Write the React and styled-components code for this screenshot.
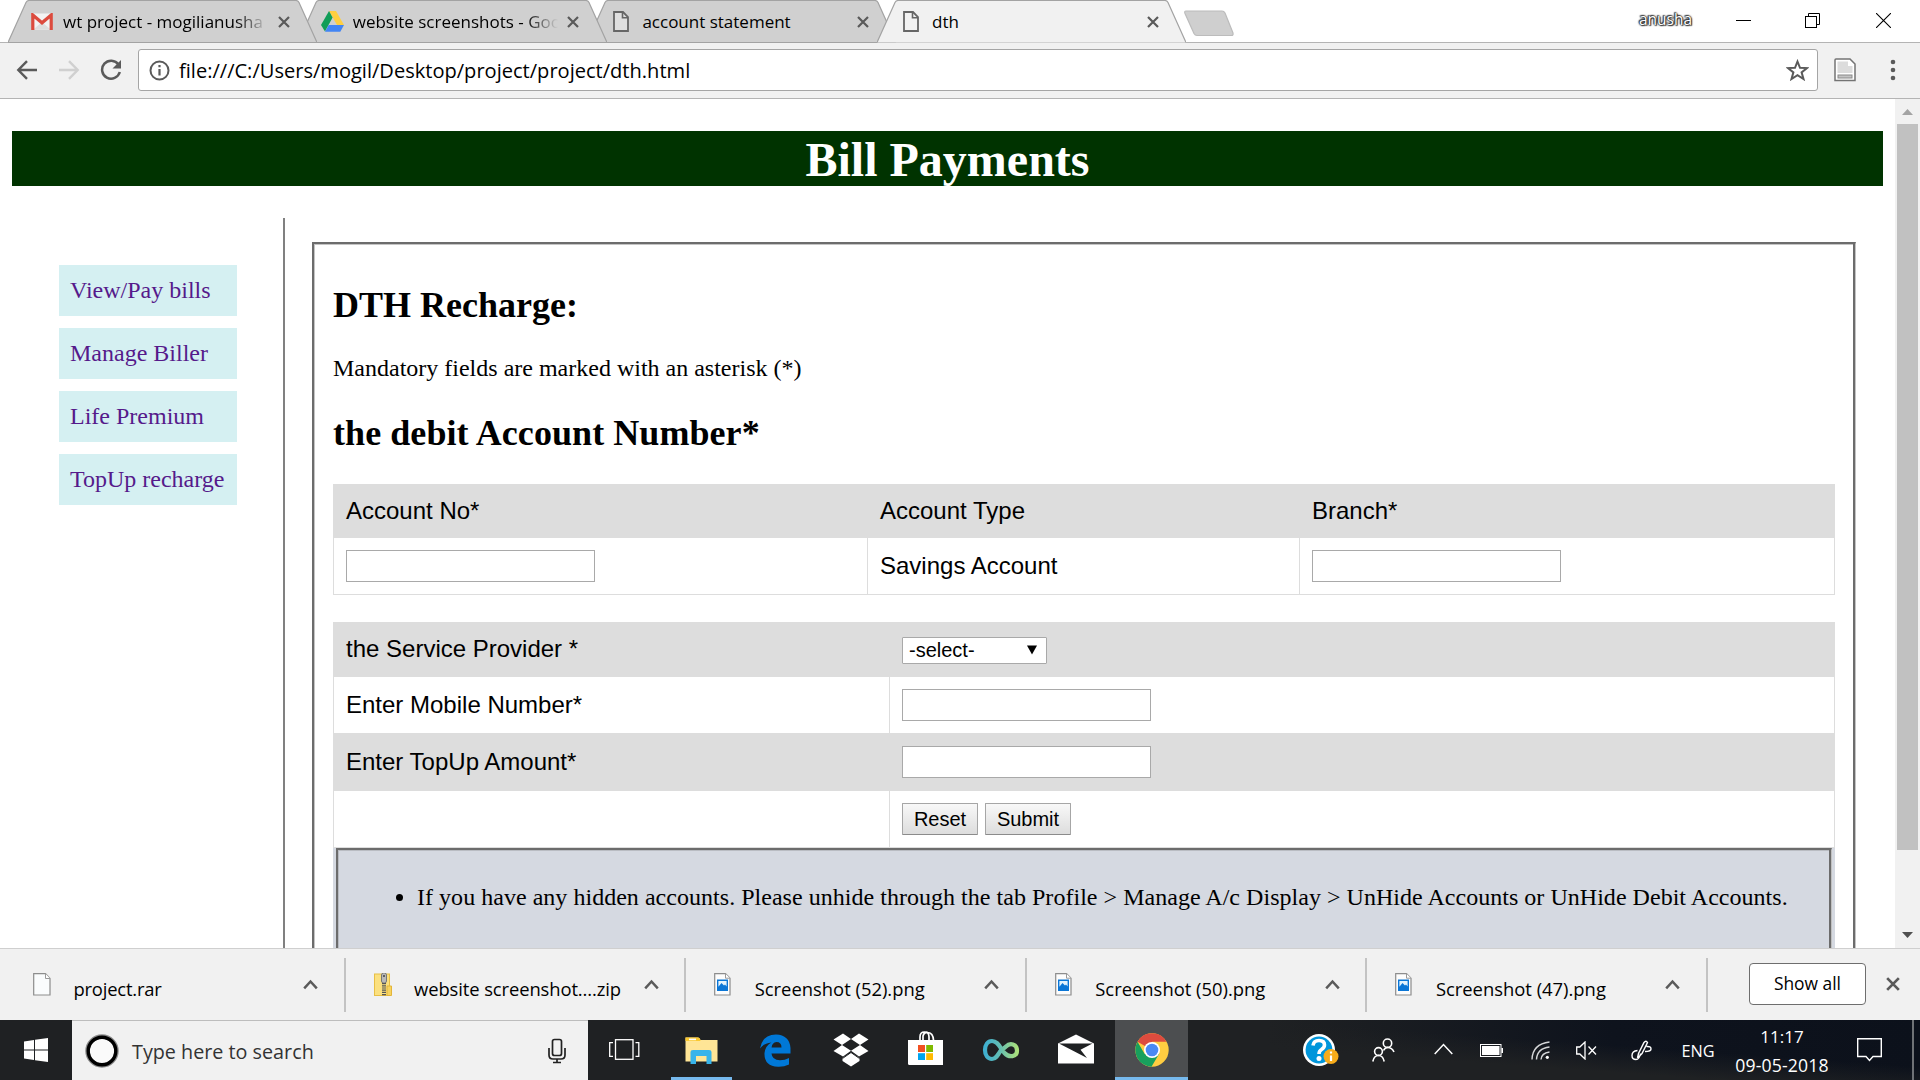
import React from "react";
import styled, { createGlobalStyle, css } from "styled-components";

const GlobalStyle = createGlobalStyle`
  *, *::before, *::after { box-sizing: border-box; }
  body { margin: 0; background: #fff; overflow: hidden; }
  svg { display: block; flex: none; }
`;

const uiFont = `"Open Sans", "Noto Sans", sans-serif`;
const serif = `"Liberation Serif", "Times New Roman", serif`;
const sans = `"Liberation Sans", Arial, sans-serif`;

const Screen = styled.div`
  width: 1920px;
  height: 1080px;
  display: flex;
  flex-direction: column;
  overflow: hidden;
  background: #fff;
  font-family: ${uiFont};
  color: #000;
`;

/* ---------- tab strip ---------- */
const TabStrip = styled.div`
  height: 43px;
  flex: none;
  display: flex;
  padding-left: 8px;
  background: linear-gradient(#b4b4b4, #b4b4b4) 0 42px / 100% 1px no-repeat;
`;

const Tab = styled.div`
  position: relative;
  isolation: isolate;
  width: 309px;
  height: 43px;
  margin-right: -19.3px;
  display: flex;
  align-items: center;
  padding-left: 23px;
  z-index: ${(p) => p.$layer};
`;

const TabShape = styled.svg`
  position: absolute;
  inset: 0;
  z-index: -1;
`;

const TabIcon = styled.div`
  width: 32px;
  display: flex;
  padding: 0 0 0 ${(p) => p.$indent || 0}px;
`;

const TabTitle = styled.div`
  width: 205px;
  white-space: nowrap;
  font-size: 17px;
  line-height: 24px;
  ${(p) =>
    p.$fade &&
    css`
      mask-image: linear-gradient(to right, #000 172px, transparent 205px);
    `}
`;

const TabClose = styled.div`
  margin-left: 9.5px;
  padding-top: 1px;
`;

const NewTab = styled.svg`
  margin: 8px 0 0 15px;
`;

const WindowControls = styled.div`
  margin-left: auto;
  display: flex;
  align-items: flex-start;
`;

const Profile = styled.div`
  width: 54px;
  margin: 8px 43px 0 0;
  font-size: 15.5px;
  line-height: 22px;
  color: #fff;
  text-shadow: 0 0 1px #222, 0 0 2px #222, 0 0 2px #333, 1px 1px 1px #444, -1px -1px 1px #444;
`;

const ControlIcon = styled.div`
  width: 15px;
  margin: 13px ${(p) => p.$gap}px 0 0;
`;

/* ---------- toolbar ---------- */
const Toolbar = styled.div`
  height: 56px;
  flex: none;
  display: flex;
  align-items: center;
  padding: 0 0 1px 16px;
  background: #f1f1f1;
  border-bottom: 1px solid #b4b4b4;
`;

const NavIcons = styled.div`
  width: 122px;
  display: flex;
  gap: 20px;
  align-items: center;
`;

const AddressBar = styled.div`
  width: 1680px;
  height: 42px;
  display: flex;
  align-items: center;
  padding: 0 8px 0 10px;
  border: 1px solid #a5a5a5;
  border-radius: 3px;
  background: #fff;
`;

const Url = styled.div`
  flex: 1;
  margin-left: 9px;
  padding-top: 1px;
  font-size: 20.07px;
  line-height: 28px;
`;

const ToolbarEnd = styled.div`
  display: flex;
  align-items: center;
  gap: 33px;
  margin-left: 15px;
`;

/* ---------- viewport ---------- */
const Viewport = styled.div`
  height: 849px;
  flex: none;
  display: flex;
  overflow: hidden;
`;

const Page = styled.div`
  width: 1895px;
  padding: 32px 12px 0;
  font-family: ${serif};
  font-size: 24px;
  line-height: 27px;
`;

const Banner = styled.h1`
  margin: 0 0 32px;
  height: 55px;
  line-height: 57px;
  font-size: 48px;
  text-align: center;
  color: #fff;
  background: #003300;
`;

const Columns = styled.div`
  display: flex;
  height: 730px;
`;

const Sidebar = styled.nav`
  width: 273px;
  padding: 47px 46px 0 47px;
  border-right: 2px solid #808080;
  display: flex;
  flex-direction: column;
  gap: 12px;
`;

const SideLink = styled.a`
  display: block;
  height: 51px;
  padding: 12px 11px;
  white-space: nowrap;
  color: #551a8b;
  background: #d5f0f2;
`;

const Panel = styled.main`
  width: 1544px;
  height: 800px;
  margin: 24px 0 0 27px;
  padding: 41px 20px 0 19px;
  border-style: solid;
  border-width: 2px 1px 0 2px;
  border-color: #6c6c6c #c4c4c4 #6c6c6c #6c6c6c;
  box-shadow: inset -2px 0 0 #6c6c6c, inset 1px 1px 0 #c4c4c4;
`;

const Heading = styled.h2`
  margin: 0;
  font-size: 36px;
  line-height: 41px;
  letter-spacing: ${(p) => p.$ls || 0}px;
`;

const Hint = styled.p`
  margin: 29px 0 31px;
`;

const Table = styled.div`
  width: 1502px;
  margin-top: ${(p) => p.$top}px;
  font-family: ${sans};
`;

const Row = styled.div`
  display: grid;
  grid-template-columns: ${(p) => p.$cols};
  height: ${(p) => p.$h}px;
  background: ${(p) => (p.$shaded ? "#dddddd" : "#fff")};
  border-right: 1px solid #ddd;
  border-bottom: ${(p) => (p.$last ? "1px solid #ddd" : "0")};
`;

const Cell = styled.div`
  display: flex;
  align-items: center;
  gap: 7px;
  padding-left: 12px;
  border-left: 1px solid #ddd;
`;

const Label = styled.span`
  padding-bottom: 2px;
`;

const TextInput = styled.input`
  width: 249px;
  height: 32px;
  padding: 0 4px;
  border: 1px solid #a9a9a9;
  border-radius: 0;
  background: #fff;
  outline: none;
`;

const SelectBox = styled.div`
  width: 145px;
  height: 27px;
  margin-top: 2px;
  padding: 0 9px 1px 6px;
  display: flex;
  align-items: center;
  justify-content: space-between;
  border: 1px solid #a9a9a9;
  border-radius: 1px;
  background: #fff;
  font-size: 20px;
  line-height: 23px;
`;

const Button = styled.button`
  width: ${(p) => p.$w}px;
  height: 32px;
  padding: 0;
  border: 1px solid #a6a6a6;
  border-bottom-color: #8b8b8b;
  border-radius: 1px;
  background: linear-gradient(#f8f8f8, #dddddd);
  font: 20px ${sans};
  color: #000;
`;

const NoteCell = styled.div`
  height: 200px;
  padding: 0 3px 0 3px;
  background: #d5d9e1;
  border-top: 1px solid #ddd;
`;

const Note = styled.div`
  height: 190px;
  border-style: solid;
  border-width: 2px 1px 0 2px;
  border-color: #6c6c6c #c0c0c0 #6c6c6c #6c6c6c;
  box-shadow: inset -2px 0 0 #6c6c6c, inset 1px 1px 0 #b9bcc2;
  font-family: ${serif};
`;

const NoteList = styled.ul`
  margin: 0;
  padding: 34px 0 0 79px;
  white-space: nowrap;
  letter-spacing: 0.029px;
`;

const Scrollbar = styled.div`
  width: 25px;
  display: flex;
  flex-direction: column;
  align-items: center;
  background: #f1f1f1;
`;

const ScrollArrow = styled.svg`
  margin: ${(p) => p.$m};
`;

const Thumb = styled.div`
  width: 21px;
  height: 726px;
  background: #c1c1c1;
`;

/* ---------- download shelf ---------- */
const Shelf = styled.div`
  height: 72px;
  flex: none;
  display: flex;
  align-items: flex-start;
  padding-left: 5px;
  background: #f1f1f1;
  border-top: 1px solid #cfcfcf;
`;

const Download = styled.div`
  width: 340.6px;
  height: 54px;
  margin-top: 9px;
  padding-left: 28px;
  display: flex;
  align-items: flex-start;
  border-right: 2px solid #c3c3c3;
`;

const FileSlot = styled.div`
  width: 40.5px;
  padding-top: 15px;
`;

const FileName = styled.div`
  width: 229.5px;
  padding-top: 17px;
  font-size: 18.4px;
  line-height: 28px;
  letter-spacing: ${(p) => p.$ls || 0}px;
  white-space: nowrap;
`;

const ShelfChevron = styled.svg`
  margin-top: 21px;
`;

const ShowAll = styled.div`
  width: 117px;
  height: 42px;
  margin: 14px 20px 0 41px;
  border: 1px solid #6e6e6e;
  border-radius: 4px;
  background: #fff;
  text-align: center;
  font-size: 17.4px;
  line-height: 39px;
`;

const ShelfClose = styled.div`
  margin-top: 28px;
`;

/* ---------- taskbar ---------- */
const Taskbar = styled.div`
  height: 60px;
  flex: none;
  display: flex;
  color: #fff;
  background: linear-gradient(4deg, #1f2123 0%, #1f2123 62%, transparent 76%),
    linear-gradient(to right, #1f2123 0%, #1f2123 66%, #0e131d 84%, #0c111b 100%);
`;

const Slot = styled.div`
  width: ${(p) => p.$w}px;
  height: 60px;
  display: flex;
  align-items: center;
  justify-content: center;
  padding-bottom: ${(p) => p.$lift || 0}px;
  background: ${(p) => (p.$active ? "#4c4e50" : "transparent")};
`;

const RunningSlot = styled(Slot)`
  border-bottom: 3px solid #76b9ed;
  padding-top: 3px;
`;

const SearchBox = styled.div`
  width: 516px;
  height: 60px;
  display: flex;
  align-items: center;
  padding: 0 19px 0 13px;
  background: #f1f1f1;
  border-top: 1px solid #bdbdbd;
`;

const SearchText = styled.div`
  flex: 1;
  margin-left: 13px;
  padding-top: 2px;
  font-size: 19.75px;
  line-height: 28px;
  color: #333;
`;

const Language = styled.div`
  font-size: 16.3px;
  line-height: 24px;
  padding-top: 2px;
`;

const Clock = styled.div`
  text-align: center;
  font-size: 17px;
  line-height: 28px;
  padding-top: 1px;
`;

const DateText = styled.div`
  font-size: 17.6px;
  letter-spacing: 0.15px;
`;

const DesktopEdge = styled.div`
  width: 2px;
  height: 60px;
  margin-left: 21px;
  background: #6f7276;
`;

const Cross = ({ size = 12, color = "#5a5a5a", width = 2.2 }) => (
  <svg width={size} height={size} viewBox="0 0 12 12">
    <path d="M1 1L11 11M11 1L1 11" stroke={color} strokeWidth={width} fill="none" />
  </svg>
);

const PageIcon = () => (
  <svg width="16" height="21" viewBox="0 0 16 21">
    <path d="M1 1H10L15 6V20H1Z" fill="#f6f6f6" fillOpacity="0.4" stroke="#666" strokeWidth="1.8" />
    <path d="M9.5 1V6.7H15" fill="none" stroke="#666" strokeWidth="1.6" />
  </svg>
);

const GmailIcon = () => (
  <svg width="22" height="17" viewBox="0 0 22 17">
    <rect x="1" y="0.5" width="20" height="16" rx="1" fill="#f3f3f3" />
    <path d="M3 16L11 9L19 16Z" fill="#dedede" />
    <path d="M1.8 17V2L11 9.8L20.2 2V17" fill="none" stroke="#dc4b3e" strokeWidth="3.2" />
  </svg>
);

const DriveIcon = () => (
  <svg width="23" height="21" viewBox="0 0 23 21">
    <path d="M8 0H15L23 14H16Z" fill="#ffcf40" />
    <path d="M8 0L11.6 6.6L4 20.5L0 14Z" fill="#109d58" />
    <path d="M7.7 14H23L19.3 20.8H4Z" fill="#4285f4" />
  </svg>
);

const tabs = [
  { title: "wt project - mogilianusha", icon: <GmailIcon />, fade: true, layer: 4 },
  { title: "website screenshots - Goo", icon: <DriveIcon />, fade: true, layer: 3 },
  { title: "account statement", icon: <PageIcon />, indent: 2.5, layer: 2 },
  { title: "dth", icon: <PageIcon />, indent: 2.5, active: true, layer: 5 },
];

const BrowserTab = ({ title, icon, fade, indent, active, layer }) => (
  <Tab $layer={layer}>
    <TabShape width="309" height="43" viewBox="0 0 309 43">
      <path
        d="M0 42.5L18 2.5Q19 0.5 21 0.5H288Q290 0.5 291 2.5L309 42.5Z"
        fill={active ? "#f1f1f1" : "#d0d0d0"}
      />
      <path
        d={`M0 42.5L18 2.5Q19 0.5 21 0.5H288Q290 0.5 291 2.5L309 42.5${active ? "" : "Z"}`}
        fill="none"
        stroke="#a3a3a3"
        strokeWidth="1.2"
      />
    </TabShape>
    <TabIcon $indent={indent}>{icon}</TabIcon>
    <TabTitle $fade={fade}>{title}</TabTitle>
    <TabClose>
      <Cross size={12} />
    </TabClose>
  </Tab>
);

const BlankFile = () => (
  <svg width="18" height="23" viewBox="0 0 18 23">
    <path d="M0.7 0.7H12.5L17 5.5V22H0.7Z" fill="#fafcfd" stroke="#8d8d8d" strokeWidth="1.2" />
    <path d="M12.5 0.7V5.5H17" fill="#fff" stroke="#9a9a9a" />
  </svg>
);

const ZipFile = () => (
  <svg width="18" height="23" viewBox="0 0 18 23">
    <rect x="0.5" y="1" width="15" height="21.5" fill="#fbe07f" stroke="#e8bf45" />
    <path d="M13 13H17.5V22.5H13Z" fill="#f7d35e" stroke="#e3b53a" />
    <rect x="7.5" y="0" width="5" height="10" rx="2" fill="#b9b9b9" stroke="#777" />
    <path d="M10 10V23" stroke="#555" strokeWidth="4" strokeDasharray="1.2 1" />
    <circle cx="10" cy="3" r="1" fill="#444" />
  </svg>
);

const ImageFile = () => (
  <svg width="17" height="23" viewBox="0 0 17 23">
    <path d="M0.7 0.7H11.5L16 5.2V22H0.7Z" fill="#fdfdfd" stroke="#8d8d8d" strokeWidth="1.2" />
    <path d="M11.5 0.7V5.2H16" fill="#fff" stroke="#9a9a9a" />
    <rect x="3" y="6.5" width="11" height="11.5" fill="#0b76d6" />
    <path d="M4.4 8H12.600V13.500L11 11.500L10 12.500L7.500 10L4.400 13.800Z" fill="#e4f3fd" />
  </svg>
);

const downloads = [
  { name: "project.rar", icon: <BlankFile />, ls: -0.2 },
  { name: "website screenshot....zip", icon: <ZipFile />, ls: -0.1 },
  { name: "Screenshot (52).png", icon: <ImageFile /> },
  { name: "Screenshot (50).png", icon: <ImageFile /> },
  { name: "Screenshot (47).png", icon: <ImageFile /> },
];

const accountCols = "534px 432px 1fr";
const formCols = "556px 1fr";

export default function App() {
  return (
    <Screen>
      <GlobalStyle />
      <TabStrip>
        {tabs.map((t) => (
          <BrowserTab key={t.title} {...t} />
        ))}
        <NewTab width="54" height="30" viewBox="0 0 54 30">
          <path d="M4 3H40Q42 3 43 5L51 25Q51.500 27.500 49.500 27.500H15Q13 27.500 12 25.500L3 5.500Q2 3 4 3Z" fill="#cfcfcf" stroke="#bcbcbc" strokeWidth="1.2" />
        </NewTab>
        <WindowControls>
          <Profile>anusha</Profile>
          <ControlIcon $gap={54}>
            <svg width="15" height="15" viewBox="0 0 15 15"><path d="M0 7.500H15" stroke="#000" /></svg>
          </ControlIcon>
          <ControlIcon $gap={56}>
            <svg width="15" height="15" viewBox="0 0 15 15" fill="none" stroke="#000">
              <rect x="0.500" y="3.500" width="11" height="11" />
              <path d="M3.500 3.500V0.500H14.500V11.500H11.500" />
            </svg>
          </ControlIcon>
          <ControlIcon $gap={29}>
            <svg width="15" height="15" viewBox="0 0 15 15"><path d="M0 0L15 15M15 0L0 15" stroke="#000" strokeWidth="1.1" /></svg>
          </ControlIcon>
        </WindowControls>
      </TabStrip>

      <Toolbar>
        <NavIcons>
          <svg width="22" height="20" viewBox="0 0 22 20" fill="none" stroke="#5a5a5a" strokeWidth="2.400"><path d="M21 10H2.500M11 1.200L2.300 10L11 18.800" /></svg>
          <svg width="22" height="20" viewBox="0 0 22 20" fill="none" stroke="#d0d0d0" strokeWidth="2.400"><path d="M1 10H19.500M11 1.200L19.700 10L11 18.800" /></svg>
          <svg width="22" height="22" viewBox="0 0 22 22"><path d="M18.500 5.500A9 9 0 1 0 19.800 13" fill="none" stroke="#5a5a5a" strokeWidth="2.500" /><path d="M21 1V9.500H12.500Z" fill="#5a5a5a" /></svg>
        </NavIcons>
        <AddressBar>
          <svg width="21" height="21" viewBox="0 0 21 21">
            <circle cx="10.500" cy="10.500" r="9" fill="none" stroke="#5a5a5a" strokeWidth="2" />
            <path d="M10.500 9V15.500M10.500 5V7.200" stroke="#5a5a5a" strokeWidth="2.200" />
          </svg>
          <Url>file:///C:/Users/mogil/Desktop/project/project/dth.html</Url>
          <svg width="23" height="22" viewBox="0 0 23 22"><path d="M11.500 2.500L14 8.800L21 9.100L15.600 13.400L17.500 20L11.500 16.200L5.500 20L7.400 13.400L2 9.100L9 8.800Z" fill="none" stroke="#5a5a5a" strokeWidth="2" /></svg>
        </AddressBar>
        <ToolbarEnd>
          <svg width="24" height="24" viewBox="0 0 24 24">
            <path d="M3 1H17L22 6V22.500H2V2Q2 1 3 1Z" fill="#fff" stroke="#747474" strokeWidth="1.500" />
            <path d="M4.500 3.500H15V8H19.500V15H4.500Z" fill="#dcdcdc" />
            <rect x="5" y="17" width="14" height="3" fill="#c3c3c3" stroke="#8a8a8a" />
          </svg>
          <svg width="6" height="22" viewBox="0 0 6 22" fill="#5a5a5a"><circle cx="3" cy="3" r="2.300" /><circle cx="3" cy="11" r="2.300" /><circle cx="3" cy="19" r="2.300" /></svg>
        </ToolbarEnd>
      </Toolbar>

      <Viewport>
        <Page>
          <Banner>Bill Payments</Banner>
          <Columns>
            <Sidebar>
              {["View/Pay bills", "Manage Biller", "Life Premium", "TopUp recharge"].map((l) => (
                <SideLink key={l}>{l}</SideLink>
              ))}
            </Sidebar>
            <Panel>
              <Heading>DTH Recharge:</Heading>
              <Hint>Mandatory fields are marked with an asterisk (*)</Hint>
              <Heading $ls={0.07}>the debit Account Number*</Heading>
              <Table $top={30}>
                <Row $cols={accountCols} $h={54} $shaded>
                  <Cell><Label>Account No*</Label></Cell>
                  <Cell><Label>Account Type</Label></Cell>
                  <Cell><Label>Branch*</Label></Cell>
                </Row>
                <Row $cols={accountCols} $h={57} $last>
                  <Cell><TextInput /></Cell>
                  <Cell><Label>Savings Account</Label></Cell>
                  <Cell><TextInput /></Cell>
                </Row>
              </Table>
              <Table $top={27}>
                <Row $cols={formCols} $h={55} $shaded>
                  <Cell><Label>the Service Provider *</Label></Cell>
                  <Cell>
                    <SelectBox>
                      -select-
                      <svg width="10" height="10" viewBox="0 0 10 10"><path d="M0 0.500H10L5 9.500Z" fill="#000" /></svg>
                    </SelectBox>
                  </Cell>
                </Row>
                <Row $cols={formCols} $h={56}>
                  <Cell><Label>Enter Mobile Number*</Label></Cell>
                  <Cell><TextInput /></Cell>
                </Row>
                <Row $cols={formCols} $h={58} $shaded>
                  <Cell><Label>Enter TopUp Amount*</Label></Cell>
                  <Cell><TextInput /></Cell>
                </Row>
                <Row $cols={formCols} $h={56}>
                  <Cell />
                  <Cell>
                    <Button $w={76}>Reset</Button>
                    <Button $w={86}>Submit</Button>
                  </Cell>
                </Row>
                <NoteCell>
                  <Note>
                    <NoteList>
                      <li>If you have any hidden accounts. Please unhide through the tab Profile &gt; Manage A/c Display &gt; UnHide Accounts or UnHide Debit Accounts.</li>
                    </NoteList>
                  </Note>
                </NoteCell>
              </Table>
            </Panel>
          </Columns>
        </Page>
        <Scrollbar>
          <ScrollArrow $m="10px 0 9px" width="11" height="6" viewBox="0 0 11 6"><path d="M0 6L5.500 0L11 6Z" fill="#a3a3a3" /></ScrollArrow>
          <Thumb />
          <ScrollArrow $m="82px 0 0" width="11" height="6" viewBox="0 0 11 6"><path d="M0 0L5.500 6L11 0Z" fill="#505050" /></ScrollArrow>
        </Scrollbar>
      </Viewport>

      <Shelf>
        {downloads.map((d) => (
          <Download key={d.name}>
            <FileSlot>{d.icon}</FileSlot>
            <FileName $ls={d.ls}>{d.name}</FileName>
            <ShelfChevron width="15" height="11" viewBox="0 0 15 11"><path d="M1.200 9.300L7.500 2.500L13.800 9.300" fill="none" stroke="#5a5a5a" strokeWidth="2.500" /></ShelfChevron>
          </Download>
        ))}
        <ShowAll>Show all</ShowAll>
        <ShelfClose><Cross size={14} width={2.3} /></ShelfClose>
      </Shelf>

      <Taskbar>
        <Slot $w={72}>
          <svg width="24" height="24" viewBox="0 0 24 24" fill="#fff"><path d="M0 3.400L10 2V11.500H0ZM11 1.800L24 0V11.500H11ZM0 12.500H10V22L0 20.600ZM11 12.500H24V24L11 22.200Z" /></svg>
        </Slot>
        <SearchBox>
          <svg width="34" height="34" viewBox="0 0 34 34"><circle cx="17" cy="17" r="14.500" fill="#fafafa" stroke="#8a8a8a" strokeWidth="4.500" /><circle cx="17" cy="17" r="13.800" fill="none" stroke="#000" strokeWidth="3.400" /></svg>
          <SearchText>Type here to search</SearchText>
          <svg width="24" height="26" viewBox="0 0 24 26" fill="none" stroke="#222" strokeWidth="1.700"><rect x="7.500" y="1.500" width="9" height="16" rx="2" /><path d="M4 10V17Q4 21 8 21H16Q20 21 20 17V10M12 21V24.500M8 24.500H16" /></svg>
        </SearchBox>

        <Slot $w={73} $lift={1}>
          <svg width="31" height="21" viewBox="0 0 31 21" fill="none" stroke="#fff" strokeWidth="1.300"><rect x="6.500" y="0.700" width="17.500" height="19.600" /><path d="M4 3.600H0.700V17.400H4M26.500 3.600H29.800V17.400H26.500" /></svg>
        </Slot>
        <Slot $w={10} />
        <RunningSlot $w={61}>
          <svg width="33" height="27" viewBox="0 0 33 27">
            <path d="M0.500 0.500H13Q15 0.500 15.500 3H32.500V24.500H0.500Z" fill="#ffe596" />
            <path d="M0.500 0.500H13Q15 0.500 15.500 4H0.500Z" fill="#fbc92f" />
            <rect x="4" y="1.600" width="7" height="1.600" fill="#fff" />
            <path d="M5.500 27V15Q5.500 13 8 13H24Q26.500 13 26.500 15V27H21.500V19H11V27Z" fill="#38b4ea" />
          </svg>
        </RunningSlot>
        <Slot $w={6} />
        <Slot $w={75}>
          <svg width="31" height="33" viewBox="0 0 31 33"><path d="M0 14.500Q2.500 0.500 16 0.500Q29.500 1 30.500 14V19.500H11.500Q12 26 20 26.300Q25 26.300 29 24V30.500Q24 33 18 32.800Q4 32 4.500 19Q5.500 11.500 11.500 8.500Q4 9 0 14.500ZM11.600 13.500H21.500Q21.500 8 16.500 8Q12 8.500 11.600 13.500Z" fill="#0078d7" /></svg>
        </Slot>
        <Slot $w={75}>
          <svg width="36" height="34" viewBox="0 0 36 34" fill="#fff"><path d="M10 0.500L18 6L9 12L0.500 6.500ZM26 0.500L35.500 6.500L27 12L18 6ZM0.500 18L9 12L18 17.800L10 23.500ZM27 12L35.500 18L26 23.500L18 17.800ZM18 19.500L26.500 25V28L18 33.500L9.500 28V25Z" /><path d="M9.500 25.500L18 19.500L26.500 25.500" fill="none" stroke="#1f2123" strokeWidth="1" /></svg>
        </Slot>
        <Slot $w={75} $lift={3}>
          <svg width="35" height="35" viewBox="0 0 35 35"><path d="M12 9V6Q12 1 16.500 1Q21 1 21 6V9M15 9V5Q16 1 20 1.500Q25 2 25.500 9" fill="none" stroke="#fff" strokeWidth="1.700" /><path d="M0 9H35V34H1.500Q0 34 0 32.500Z" fill="#fff" /><path d="M10 14H17V21H10Z" fill="#f25022" /><path d="M18.200 14H25V21H18.200Z" fill="#7fba00" /><path d="M10 22.200H17V29H10Z" fill="#00a4ef" /><path d="M18.200 22.200H25V29H18.200Z" fill="#ffb900" /></svg>
        </Slot>
        <Slot $w={75}>
          <svg width="38" height="24" viewBox="0 0 38 24">
            <defs><linearGradient id="loop" x1="0" x2="1"><stop offset="0" stopColor="#3fb0d0" /><stop offset="0.450" stopColor="#62bdb4" /><stop offset="1" stopColor="#a9e07c" /></linearGradient></defs>
            <path d="M19 12C15.500 18 13.500 21 10 21C5.500 21 3 17 3 12C3 7 5.500 3 10 3C16 3 18 10 22.500 15C27 20 35 19 35 12.500C35 6 28 4.500 24 8.500Q21.500 11 19 12" fill="none" stroke="url(#loop)" strokeWidth="4.200" />
          </svg>
        </Slot>
        <Slot $w={75} $lift={3}>
          <svg width="36" height="30" viewBox="0 0 36 30"><path d="M0 9.500L18 0.500L36 9.500V29.500H0Z" fill="#fff" /><path d="M1 9.500H34.500L22.500 15.800L29 24L16 17.200Z" fill="#1f2123" /></svg>
        </Slot>
        <Slot $w={2} />
        <RunningSlot $w={73} $active>
          <svg width="34" height="34" viewBox="0 0 34 34">
            <circle cx="17" cy="17" r="16.700" fill="#ffcd41" />
            <path d="M17 17L2.500 8.700A16.700 16.700 0 0 1 31.500 8.700H17Z" fill="#dd4b3e" />
            <path d="M2.500 8.700A16.700 16.700 0 0 0 16.500 33.700L24.300 20.500L17 17L9.700 21Z" fill="#18a05d" />
            <circle cx="17" cy="17" r="8" fill="#fff" />
            <circle cx="17" cy="17" r="6.300" fill="#4a89f3" />
          </svg>
        </RunningSlot>
        <Slot $w={101} />

        <Slot $w={63}>
          <svg width="36" height="34" viewBox="0 0 36 34">
            <circle cx="16" cy="17" r="16" fill="#fff" />
            <circle cx="16" cy="17" r="13.400" fill="#0096db" />
            <path d="M10 12.500Q10.500 7.500 16 7.500Q21.500 7.500 21.500 12Q21.500 14.500 18.500 16.500Q16 18 16 21" fill="none" stroke="#fff" strokeWidth="3.600" />
            <circle cx="16" cy="25.500" r="2.500" fill="#fff" />
            <circle cx="28" cy="23.500" r="7.500" fill="#f7ac1b" />
            <path d="M28 22.500V28M28 18.500V20.500" stroke="#fff" strokeWidth="2.200" />
          </svg>
        </Slot>
        <Slot $w={62}>
          <svg width="23" height="24" viewBox="0 0 23 24" fill="none" stroke="#fff" strokeWidth="1.600"><circle cx="15.500" cy="5.200" r="4.200" /><circle cx="6.500" cy="13.500" r="3.900" /><path d="M11.500 12.500Q13 9.500 15.500 9.500Q20 9.500 22 14M0.800 23.500Q2 17.500 6.500 17.500Q11 17.500 12.200 23.500" /></svg>
        </Slot>
        <Slot $w={58} $lift={2}>
          <svg width="19" height="12" viewBox="0 0 19 12" fill="none" stroke="#fff" strokeWidth="1.500"><path d="M0.700 11L9.500 1.500L18.300 11" /></svg>
        </Slot>
        <Slot $w={39}>
          <svg width="23" height="13" viewBox="0 0 23 13"><rect x="0.500" y="0.500" width="20.500" height="12" fill="none" stroke="#fff" /><rect x="2" y="2" width="17.500" height="9" fill="#fff" /><rect x="21.500" y="4" width="1.500" height="5" fill="#fff" /></svg>
        </Slot>
        <Slot $w={58}>
          <svg width="19" height="19" viewBox="0 0 19 19" fill="none" stroke="#d5d7d9" strokeWidth="1.400"><path d="M1 18.500Q1.500 3 18.500 1" /><path d="M5.500 18.500Q6 7.500 18.500 6" /><path d="M10 18.500Q10.500 12 18.500 11" /><circle cx="16.300" cy="16.300" r="1.600" fill="#fff" stroke="none" /></svg>
        </Slot>
        <Slot $w={34}>
          <svg width="21" height="19" viewBox="0 0 21 19" fill="none" stroke="#fff" strokeWidth="1.300"><path d="M0.700 6H3.800L9 1V18L3.800 13H0.700ZM12.500 5.500L20 13.500M20 5.500L12.500 13.500" /></svg>
        </Slot>
        <Slot $w={76}>
          <svg width="21" height="21" viewBox="0 0 21 21" fill="none" stroke="#fff" strokeWidth="1.400"><path d="M6.500 18L7.500 13.500L13 2.500Q15 0 16.500 2.500L11 13.500L6.500 18M6.500 10.500Q1 11 1 15.500Q1 19.500 5 19.500M9.500 13.500Q8.500 19.500 5 19.500M15.500 6.500Q20 6 20 9Q20 11.500 14 11.500" /></svg>
        </Slot>
        <Slot $w={38}><Language>ENG</Language></Slot>
        <Slot $w={130}>
          <Clock>
            11:17
            <DateText>09-05-2018</DateText>
          </Clock>
        </Slot>
        <Slot $w={44}>
          <svg width="25" height="24" viewBox="0 0 25 24" fill="none" stroke="#fff" strokeWidth="1.400"><path d="M0.700 0.700H24.300V18.500H16L12.500 22.500L9 18.500H0.700Z" /></svg>
        </Slot>
        <DesktopEdge />
      </Taskbar>
    </Screen>
  );
}
